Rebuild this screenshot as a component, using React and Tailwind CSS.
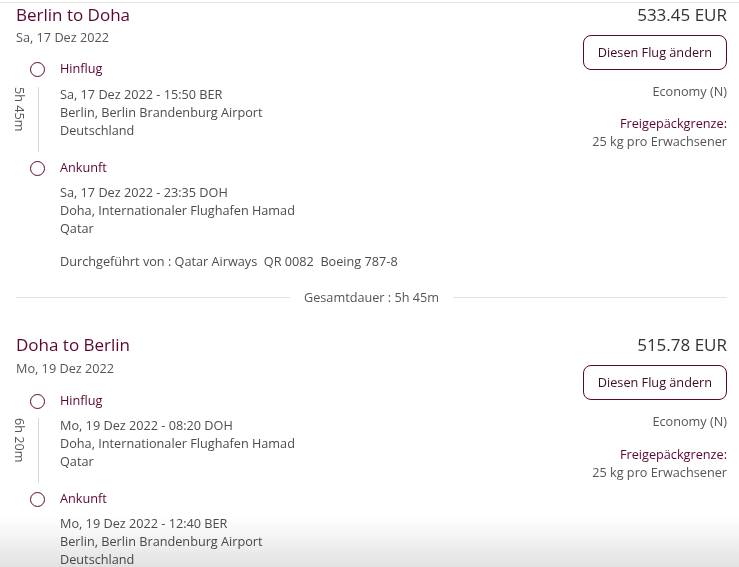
import React from 'react';

const legs = [
  {
    title: 'Berlin to Doha',
    date: 'Sa, 17 Dez 2022',
    price: '533.45 EUR',
    duration: '5h 45m',
    dep: ['Sa, 17 Dez 2022 - 15:50 BER', 'Berlin, Berlin Brandenburg Airport', 'Deutschland'],
    arr: ['Sa, 17 Dez 2022 - 23:35 DOH', 'Doha, Internationaler Flughafen Hamad', 'Qatar'],
    operated: 'Durchgeführt von : Qatar Airways\u00a0\u00a0QR 0082\u00a0\u00a0Boeing 787-8',
    total: 'Gesamtdauer : 5h 45m',
  },
  {
    title: 'Doha to Berlin',
    date: 'Mo, 19 Dez 2022',
    price: '515.78 EUR',
    duration: '6h 20m',
    dep: ['Mo, 19 Dez 2022 - 08:20 DOH', 'Doha, Internationaler Flughafen Hamad', 'Qatar'],
    arr: ['Mo, 19 Dez 2022 - 12:40 BER', 'Berlin, Berlin Brandenburg Airport', 'Deutschland'],
    second: true,
  },
];

const Dot = () => (
  <div className="ml-[18px] w-[15px] h-[15px] rounded-full border-[1.5px] border-[#5c0632] bg-white shrink-0" />
);

const StopRow = ({ label }) => (
  <div className="flex items-center h-[22px]">
    <div className="w-[48px] shrink-0 flex items-center">
      <Dot />
    </div>
    <span className="text-[12.7px] text-[#5c0632]">{label}</span>
  </div>
);

const Lines = ({ lines }) => (
  <div className="text-[12.7px] leading-[18px] text-[#4d4d4d]">
    {lines.map((l) => (
      <p key={l}>{l}</p>
    ))}
  </div>
);

const Leg = ({ leg }) => (
  <div className="flex justify-between pl-4 pr-3">
    <div>
      <h2 className="text-[17px] leading-6 text-[#5c0632]">{leg.title}</h2>
      <p className={`${leg.second ? 'mt-[2px]' : 'mt-px'} text-[12.7px] leading-[18px] text-[#555]`}>{leg.date}</p>

      <div className={`-ml-1 ${leg.second ? 'mt-[13px]' : 'mt-3'}`}>
        <StopRow label="Hinflug" />
        <div className={`flex ${leg.second ? 'mt-[4px]' : 'mt-[5px]'}`}>
          <div className="w-[48px] shrink-0 flex">
            <span className="ml-[3px] mt-[2px] h-fit text-[12.7px] leading-[10px] text-[#555] [writing-mode:vertical-rl]">
              {leg.duration}
            </span>
            <div className="ml-[13px] w-px bg-[#d6d6d6] mt-[2px]" />
          </div>
          <div className="pb-[13px]">
            <Lines lines={leg.dep} />
          </div>
        </div>
        <div className="mt-[5px]">
          <StopRow label="Ankunft" />
        </div>
        <div className="flex mt-[4px]">
          <div className="w-[48px] shrink-0" />
          <div>
            <Lines lines={leg.arr} />
            {leg.operated && (
              <p className="mt-[15px] text-[12.7px] leading-[18px] text-[#4d4d4d] whitespace-pre">{leg.operated}</p>
            )}
          </div>
        </div>
      </div>
    </div>

    <div className="flex flex-col items-end text-right">
      <p className="text-[17px] leading-6 text-[#333]">{leg.price}</p>
      <button className="mt-2 h-[35px] px-[14px] rounded-lg border border-[#5c0632] text-[12.7px] text-[#3f0a26] bg-white">
        Diesen Flug ändern
      </button>
      <p className="mt-3 text-[12.7px] leading-[18px] text-[#555]">Economy (N)</p>
      <p className={`${leg.second ? 'mt-[15px]' : 'mt-[14px]'} text-[12.7px] leading-[18px] text-[#5c0632]`}>Freigepäckgrenze:</p>
      <p className="text-[12.7px] leading-[18px] text-[#555]">25 kg pro Erwachsener</p>
    </div>
  </div>
);

export default function App() {
  return (
    <div className="relative h-[567px] overflow-hidden bg-white" style={{ fontFamily: '"Open Sans", "Noto Sans", sans-serif' }}>
      <div className="mt-[2px] border-t border-[#e4e4e4]">
        <Leg leg={legs[0]} />
        <div className="flex items-center mt-[18px] pl-4 pr-3">
          <div className="flex-1 h-px bg-[#e2e2e2]" />
          <span className="px-[14px] text-[12.7px] leading-[18px] text-[#555]">{legs[0].total}</span>
          <div className="flex-1 h-px bg-[#e2e2e2]" />
        </div>
        <div className="mt-[27px]">
          <Leg leg={legs[1]} />
        </div>
      </div>
      <div className="pointer-events-none absolute inset-x-0 bottom-0 h-[50px] bg-gradient-to-b from-white to-[#e2e2e2] mix-blend-multiply" />
    </div>
  );
}
